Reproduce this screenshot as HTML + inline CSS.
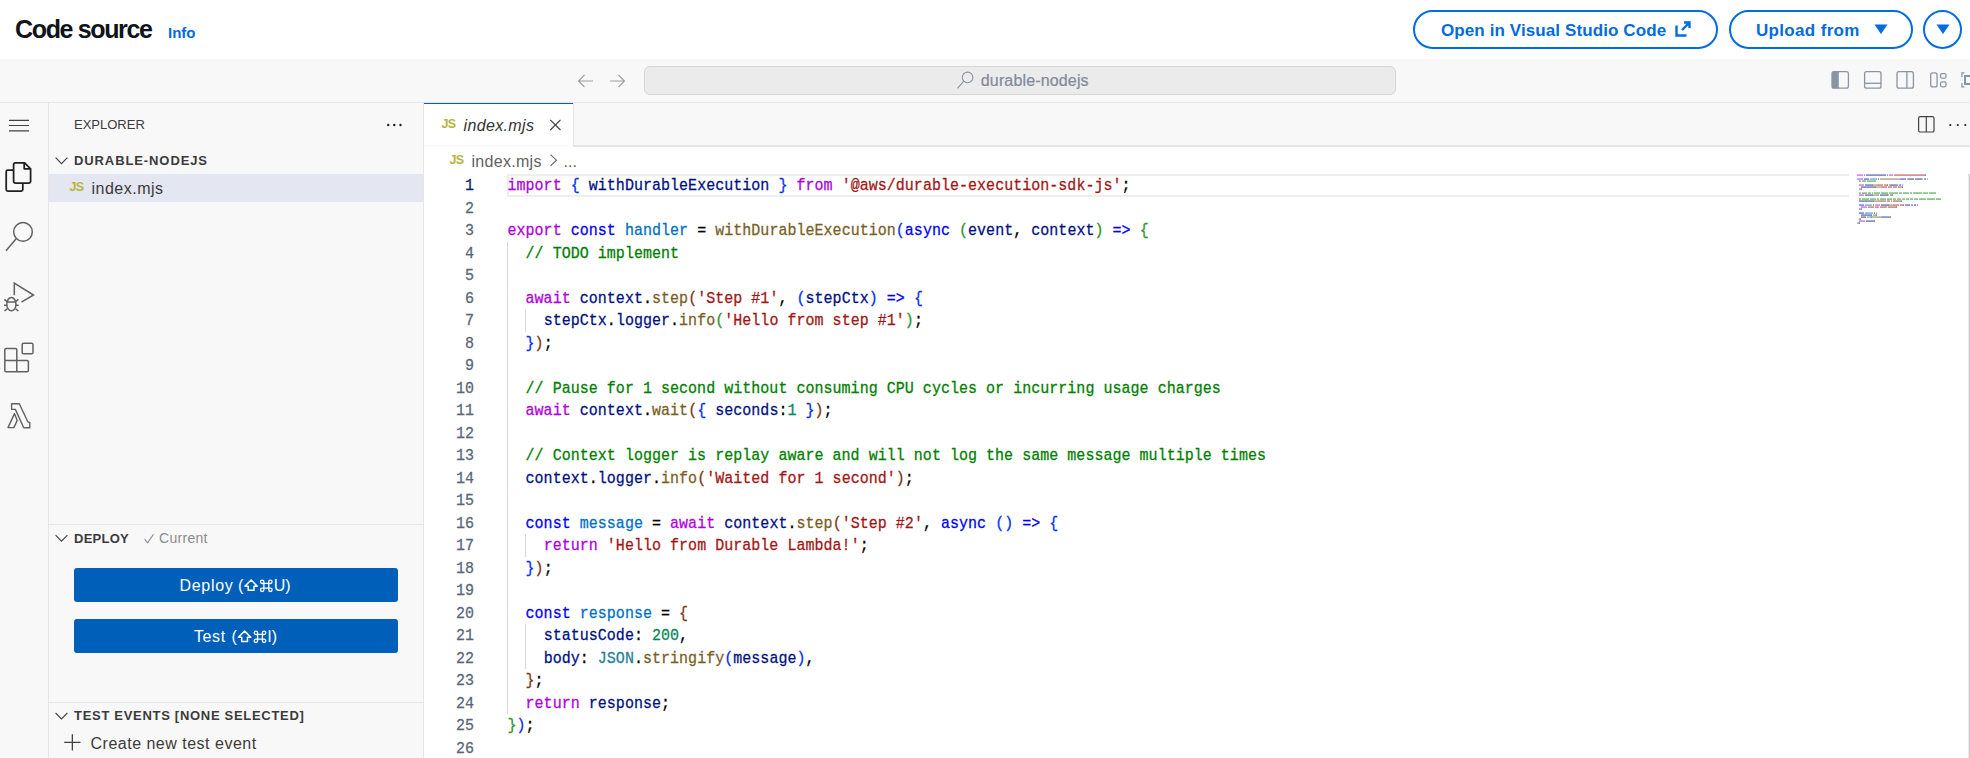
<!DOCTYPE html>
<html><head><meta charset="utf-8">
<style>
*{margin:0;padding:0;box-sizing:border-box}
html,body{width:1970px;height:758px;overflow:hidden;background:#fff;font-family:"Liberation Sans",sans-serif}
.a{position:absolute;white-space:nowrap}
svg{position:absolute;overflow:visible}
.btn{position:absolute;border:2px solid #006ce0;border-radius:20px}
.bt{color:#006ce0;font-weight:bold;font-size:17px;line-height:20px}
.code{position:absolute;font-family:"Liberation Mono",monospace;font-size:15px;line-height:22.5px;height:22.5px;white-space:pre;color:#000;transform:scaleY(1.1);transform-origin:0 13.7px;-webkit-text-stroke:0.25px currentColor;letter-spacing:0.028px}
.ln{position:absolute;left:404px;width:70px;text-align:right;color:#5b6675;font-family:"Liberation Mono",monospace;font-size:15px;line-height:22.5px;height:22.5px;transform:scaleY(1.1);transform-origin:0 13.7px;-webkit-text-stroke:0.25px currentColor;letter-spacing:0.028px}
.kw{color:#af00db}.st{color:#0000ff}.v{color:#001080}.c{color:#0070c1}.f{color:#795e26}.s{color:#a31515}.cm{color:#008000}.n{color:#098658}.cl{color:#267f99}
.b1{color:#0431fa}.b2{color:#319331}.b3{color:#7b3814}
.g{position:absolute;width:1px;background:#d9d9d9}
</style></head><body>
<!-- page header -->
<div class="a" style="left:15px;top:14px;font-size:25px;line-height:30px;font-weight:bold;color:#0f141a;letter-spacing:-1.35px">Code source</div>
<div class="a" style="left:168px;top:24px;font-size:15px;line-height:18px;font-weight:bold;color:#006ce0">Info</div>
<div class="btn" style="left:1413px;top:10px;width:305px;height:39px"></div>
<div class="a bt" style="left:1441px;top:21px;letter-spacing:0.1px">Open in Visual Studio Code</div>
<svg style="left:1675px;top:21px" width="16" height="16" viewBox="0 0 16 16"><path d="M1.5 4.5v10h10M7 9L14.5 1.5M9 1.5h5.5V7" fill="none" stroke="#006ce0" stroke-width="2.4"/></svg>
<div class="btn" style="left:1729px;top:10px;width:184px;height:39px"></div>
<div class="a bt" style="left:1756px;top:21px;letter-spacing:0.33px">Upload from</div>
<svg style="left:1874px;top:24px" width="14" height="10" viewBox="0 0 14 10"><path d="M0.5 0.5h13L7 10z" fill="#006ce0"/></svg>
<div class="btn" style="left:1923px;top:10px;width:39px;height:39px;border-radius:50%"></div>
<svg style="left:1936px;top:24px" width="14" height="10" viewBox="0 0 14 10"><path d="M0.5 0.5h13L7 10z" fill="#006ce0"/></svg>

<!-- title bar -->
<div class="a" style="left:0;top:59px;width:1970px;height:43px;background:#f8f8f8"></div>
<div class="a" style="left:0;top:102px;width:1970px;height:1px;background:#e5e5e5"></div>
<svg style="left:577px;top:73.5px" width="16" height="14" viewBox="0 0 16 14"><path d="M16 7H1.5M7.5 1L1.5 7l6 6" fill="none" stroke="#a0a0a0" stroke-width="1.2"/></svg>
<svg style="left:610px;top:73.5px" width="16" height="14" viewBox="0 0 16 14"><path d="M0 7h14.5M8.5 1l6 6-6 6" fill="none" stroke="#a0a0a0" stroke-width="1.2"/></svg>
<div class="a" style="left:644px;top:66px;width:752px;height:29px;background:#ebebeb;border:1px solid #d4d5d9;border-radius:6px"></div>
<svg style="left:956px;top:70px" width="20" height="20" viewBox="0 0 20 20"><circle cx="11.6" cy="7.4" r="5.3" fill="none" stroke="#8a939f" stroke-width="1.1"/><path d="M7.8 11.2L1.5 18.4" stroke="#8a939f" stroke-width="1.1"/></svg>
<div class="a" style="left:980.8px;top:72.2px;font-size:16px;line-height:18px;color:#818a97;letter-spacing:0.15px;-webkit-text-stroke:0.2px #818a97">durable-nodejs</div>
<!-- layout icons -->
<svg style="left:0;top:0" width="1970" height="100" viewBox="0 0 1970 100">
<g fill="none" stroke="#8a95a3" stroke-width="1.3">
<rect x="1832" y="71.6" width="16.4" height="16.6" rx="2"/>
<rect x="1864.6" y="71.6" width="16.4" height="16.6" rx="2"/><path d="M1864.6 83.3h16.4"/>
<rect x="1897" y="71.6" width="16.4" height="16.6" rx="2"/><path d="M1906.9 71.6v16.6"/>
<rect x="1930.7" y="72.9" width="6.4" height="14" rx="2"/>
<rect x="1940.6" y="73.6" width="5.4" height="4.6" rx="1.5"/>
<rect x="1940.6" y="81.9" width="5.4" height="4.9" rx="1.5"/>
<path d="M1964.5 72.9h-2.6v4M1961.9 82.9v4h2.6"/>
</g>
<path d="M1832 72.6a1 1 0 0 1 1-1h5.8v16.6h-5.8a1 1 0 0 1 -1-1z" fill="#8a95a3"/>
<rect x="1964" y="75" width="6" height="10" fill="#8a95a3"/>
<rect x="1966" y="77" width="4" height="6" fill="#f8f8f8"/>
</svg>

<!-- activity bar -->
<div class="a" style="left:0;top:103px;width:48px;height:655px;background:#f8f8f8"></div>
<div class="a" style="left:48px;top:103px;width:1px;height:655px;background:#e5e5e5"></div>
<svg style="left:0;top:103px" width="48" height="655" viewBox="0 103 48 655">
<g fill="none" stroke="#424242" stroke-width="1.2">
<path d="M9 120.3h20M9 125.5h20M9 130.8h20"/>
</g>
<g fill="none" stroke="#1f1f1f" stroke-width="1.75" stroke-linejoin="round">
<path d="M13.8 170.2h-6a1.6 1.6 0 0 0 -1.6 1.6v17.6a1.6 1.6 0 0 0 1.6 1.6h13.4a1.6 1.6 0 0 0 1.6 -1.6v-6"/>
<path d="M15.2 162.8h9.4l6 6v12.8a1.6 1.6 0 0 1 -1.6 1.6h-13.8a1.6 1.6 0 0 1 -1.6 -1.6v-17.2a1.6 1.6 0 0 1 1.6 -1.6z"/>
<path d="M24.2 163v5.8h6"/>
</g>
<g fill="none" stroke="#616161" stroke-width="1.5">
<circle cx="23" cy="231.9" r="9.3"/>
<path d="M16.4 238.6L6 250.8"/>
<path d="M14.3 295.2V283.2l19.2 11.8-12 7.2"/>
<ellipse cx="11.4" cy="304.2" rx="4.6" ry="6.6"/>
<path d="M6.8 302h9.2M4.4 299.4l2.8 2.2M18.4 299.4l-2.8 2.2M4 305.2h2.8M15.8 305.2h2.8M4.4 311l2.8-2.2M18.4 311l-2.8-2.2"/>
<path d="M6.2 348.4h9.2a1.4 1.4 0 0 1 1.4 1.4v10.6h10.2a1.4 1.4 0 0 1 1.4 1.4v8.6a1.4 1.4 0 0 1 -1.4 1.4h-20.8a1.4 1.4 0 0 1 -1.4 -1.4v-20.6a1.4 1.4 0 0 1 1.4 -1.4zM4.8 360.4h12M16.8 360.4v11.4"/>
<rect x="22.2" y="343.2" width="10.8" height="10.6" rx="1.4"/>
<path d="M11.6 403.8H19.3L27.8 421.8L29.8 422.6V427.8H23.7L15.4 409.4H11.6Z" stroke-width="1.4" stroke-linejoin="round"/><path d="M14.5 413.6L17.2 420.4L13.9 427.6H8Z" stroke-width="1.4" stroke-linejoin="round"/>
</g>
</svg>
<!-- sidebar -->
<div class="a" style="left:49px;top:103px;width:374px;height:655px;background:#f8f8f8"></div>
<div class="a" style="left:423px;top:103px;width:1px;height:655px;background:#e5e5e5"></div>
<div class="a" style="left:74px;top:117px;font-size:13px;line-height:15px;color:#3b3b3b;letter-spacing:0px">EXPLORER</div>
<svg style="left:0;top:0" width="430" height="758" viewBox="0 0 430 758">
<g fill="#1f1f1f"><circle cx="388.2" cy="125" r="1.2"/><circle cx="394.3" cy="125" r="1.2"/><circle cx="400.5" cy="125" r="1.2"/></g>
<g fill="none" stroke="#424242" stroke-width="1.1">
<path d="M55.6 157.6l5.9 6 5.9-6"/>
<path d="M55.6 535.2l5.9 6 5.9-6"/>
<path d="M55.6 713l5.9 6 5.9-6"/>
<path d="M64.2 742.4h16.3M72.35 734.3v16.1" stroke-width="1.3"/>
</g>
<path d="M144.6 539.2l3 3.6l5.9-8.6" fill="none" stroke="#8c8c8c" stroke-width="1.1"/>
</svg>
<div class="a" style="left:74px;top:153px;font-size:13px;line-height:15px;font-weight:bold;color:#3b3b3b;letter-spacing:0.9px">DURABLE-NODEJS</div>
<div class="a" style="left:49px;top:174px;width:374px;height:28px;background:#e4e6f1"></div>
<div class="a" style="left:69.5px;top:181px;font-size:12.5px;line-height:12px;font-weight:bold;color:#b5b53a;letter-spacing:-0.6px">JS</div>
<div class="a" style="left:91.5px;top:180px;font-size:16px;line-height:18px;color:#3b3b3b;letter-spacing:0.5px">index.mjs</div>

<div class="a" style="left:49px;top:524px;width:374px;height:1px;background:#e5e5e5"></div>
<div class="a" style="left:74px;top:531px;font-size:13px;line-height:15px;font-weight:bold;color:#3b3b3b;letter-spacing:0.25px">DEPLOY</div>
<div class="a" style="left:159px;top:530px;font-size:14px;line-height:16px;color:#8c8c8c;letter-spacing:0.3px">Current</div>
<div class="a" style="left:74px;top:568px;width:324px;height:34px;background:#005fb8;border-radius:3px"></div>
<div class="a" style="left:74px;top:619px;width:324px;height:34px;background:#005fb8;border-radius:3px"></div>
<div class="a" style="left:179.5px;top:576.5px;font-size:16px;line-height:18px;color:#fff;letter-spacing:0.7px">Deploy</div>
<div class="a" style="left:238px;top:576.5px;font-size:16px;line-height:18px;color:#fff">(</div>
<div class="a" style="left:273.8px;top:576.5px;font-size:16px;line-height:18px;color:#fff">U)</div>
<div class="a" style="left:194px;top:627.5px;font-size:16px;line-height:18px;color:#fff;letter-spacing:0.6px">Test</div>
<div class="a" style="left:231.5px;top:627.5px;font-size:16px;line-height:18px;color:#fff">(</div>
<div class="a" style="left:267.2px;top:627.5px;font-size:16px;line-height:18px;color:#fff">I)</div>
<svg style="left:0;top:0" width="430" height="758" viewBox="0 0 430 758">
<g fill="none" stroke="#fff" stroke-width="1.5" stroke-linejoin="round">
<path d="M251.1 580l6.2 6.2h-3.3v4.1h-5.8v-4.1h-3.3z"/>
<path d="M244.6 631.1l6.2 6.2h-3.3v4.1h-5.8v-4.1h-3.3z"/>
<path d="M263.9 583.4h4.8v4.8h-4.8zM263.9 583.4v-1.6a1.7 1.7 0 1 0 -1.7 1.7h1.7M268.7 583.4v-1.6a1.7 1.7 0 1 1 1.7 1.7h-1.7M263.9 588.2v1.6a1.7 1.7 0 1 1 -1.7 -1.7h1.7M268.7 588.2v1.6a1.7 1.7 0 1 0 1.7 -1.7h-1.7" stroke-width="1.3"/>
<path d="M257.6 634.4h4.8v4.8h-4.8zM257.6 634.4v-1.6a1.7 1.7 0 1 0 -1.7 1.7h1.7M262.4 634.4v-1.6a1.7 1.7 0 1 1 1.7 1.7h-1.7M257.6 639.2v1.6a1.7 1.7 0 1 1 -1.7 -1.7h1.7M262.4 639.2v1.6a1.7 1.7 0 1 0 1.7 -1.7h-1.7" stroke-width="1.3"/>
</g>
</svg>
<div class="a" style="left:49px;top:702px;width:374px;height:1px;background:#e5e5e5"></div>
<div class="a" style="left:74px;top:708px;font-size:13px;line-height:15px;font-weight:bold;color:#3b3b3b;letter-spacing:0.7px">TEST EVENTS [NONE SELECTED]</div>
<div class="a" style="left:90.5px;top:735px;font-size:16px;line-height:18px;color:#3b3b3b;letter-spacing:0.5px">Create new test event</div>
<!-- editor -->
<div class="a" style="left:424px;top:103px;width:1546px;height:43px;background:#f8f8f8"></div>
<div class="a" style="left:424px;top:145px;width:1546px;height:2px;background:#e5e5e5"></div>
<div class="a" style="left:424px;top:147px;width:1546px;height:611px;background:#fff"></div>
<div class="a" style="left:424px;top:103px;width:149px;height:44px;background:#fff;border-top:1px solid #005fb8;border-bottom:2px solid #fafafa"></div>
<div class="a" style="left:573px;top:103px;width:1px;height:42px;background:#e5e5e5"></div>
<div class="a" style="left:441.5px;top:118px;font-size:12.5px;line-height:12px;font-weight:bold;color:#b5b53a;letter-spacing:-0.6px">JS</div>
<div class="a" style="left:463.5px;top:116.5px;font-size:16px;line-height:18px;font-style:italic;color:#333;letter-spacing:0.35px">index.mjs</div>
<svg style="left:0;top:0" width="1970" height="200" viewBox="0 0 1970 200">
<path d="M550.3 119.8l10.2 10.2M560.5 119.8l-10.2 10.2" stroke="#424242" stroke-width="1.2" fill="none"/>
<rect x="1918.6" y="116.6" width="15.4" height="15.4" rx="1.6" fill="none" stroke="#424242" stroke-width="1.2"/>
<path d="M1926.3 116.6v15.4" stroke="#424242" stroke-width="1.2"/>
<g fill="#1f1f1f"><circle cx="1950.3" cy="125" r="1.1"/><circle cx="1957.8" cy="125" r="1.1"/><circle cx="1965.3" cy="125" r="1.1"/></g>
<path d="M550.5 154.6l6 5.6-6 5.6" stroke="#616161" stroke-width="1.1" fill="none"/>
</svg>
<div class="a" style="left:449.5px;top:154px;font-size:12.5px;line-height:12px;font-weight:bold;color:#b5b53a;letter-spacing:-0.6px">JS</div>
<div class="a" style="left:471.5px;top:152.5px;font-size:16px;line-height:18px;color:#616161;letter-spacing:0.3px">index.mjs</div>
<div class="a" style="left:563.5px;top:152.5px;font-size:16px;line-height:18px;color:#616161">...</div>
<!-- current line box -->
<div class="a" style="left:507px;top:174px;width:1342px;height:23px;border:2px solid #eeeeee;border-right:none"></div>
<!-- guides -->
<div class="g" style="left:507px;top:241.5px;height:472.5px"></div>
<div class="g" style="left:525px;top:309px;height:22.5px"></div>
<div class="g" style="left:525px;top:534px;height:22.5px"></div>
<div class="g" style="left:525px;top:624px;height:45px"></div>
<div class="a" style="left:1968px;top:174px;width:1px;height:584px;background:#ececec"></div><div class="a" style="left:1969px;top:174px;width:1px;height:584px;background:#c8c8c8"></div>
<div class="ln" style="top:176.3px;color:#0b216f">1</div>
<div class="code" style="left:507.5px;top:176.3px"><span class="kw">import</span> <span class="b1">{</span> <span class="v">withDurableExecution</span> <span class="b1">}</span> <span class="kw">from</span> <span class="s">&#x27;@aws/durable-execution-sdk-js&#x27;</span>;</div>
<div class="ln" style="top:198.8px">2</div>
<div class="ln" style="top:221.3px">3</div>
<div class="code" style="left:507.5px;top:221.3px"><span class="kw">export</span> <span class="st">const</span> <span class="c">handler</span> = <span class="f">withDurableExecution</span><span class="b1">(</span><span class="st">async</span> <span class="b2">(</span><span class="v">event</span>, <span class="v">context</span><span class="b2">)</span> <span class="st">=&gt;</span> <span class="b2">{</span></div>
<div class="ln" style="top:243.8px">4</div>
<div class="code" style="left:507.5px;top:243.8px">  <span class="cm">// TODO implement</span></div>
<div class="ln" style="top:266.3px">5</div>
<div class="ln" style="top:288.8px">6</div>
<div class="code" style="left:507.5px;top:288.8px">  <span class="kw">await</span> <span class="v">context</span>.<span class="f">step</span><span class="b3">(</span><span class="s">&#x27;Step #1&#x27;</span>, <span class="b1">(</span><span class="v">stepCtx</span><span class="b1">)</span> <span class="st">=&gt;</span> <span class="b1">{</span></div>
<div class="ln" style="top:311.3px">7</div>
<div class="code" style="left:507.5px;top:311.3px">    <span class="v">stepCtx</span>.<span class="v">logger</span>.<span class="f">info</span><span class="b2">(</span><span class="s">&#x27;Hello from step #1&#x27;</span><span class="b2">)</span>;</div>
<div class="ln" style="top:333.8px">8</div>
<div class="code" style="left:507.5px;top:333.8px">  <span class="b1">}</span><span class="b3">)</span>;</div>
<div class="ln" style="top:356.3px">9</div>
<div class="ln" style="top:378.8px">10</div>
<div class="code" style="left:507.5px;top:378.8px">  <span class="cm">// Pause for 1 second without consuming CPU cycles or incurring usage charges</span></div>
<div class="ln" style="top:401.3px">11</div>
<div class="code" style="left:507.5px;top:401.3px">  <span class="kw">await</span> <span class="v">context</span>.<span class="f">wait</span><span class="b3">(</span><span class="b1">{</span> <span class="v">seconds</span>:<span class="n">1</span> <span class="b1">}</span><span class="b3">)</span>;</div>
<div class="ln" style="top:423.8px">12</div>
<div class="ln" style="top:446.3px">13</div>
<div class="code" style="left:507.5px;top:446.3px">  <span class="cm">// Context logger is replay aware and will not log the same message multiple times</span></div>
<div class="ln" style="top:468.8px">14</div>
<div class="code" style="left:507.5px;top:468.8px">  <span class="v">context</span>.<span class="v">logger</span>.<span class="f">info</span><span class="b3">(</span><span class="s">&#x27;Waited for 1 second&#x27;</span><span class="b3">)</span>;</div>
<div class="ln" style="top:491.3px">15</div>
<div class="ln" style="top:513.8px">16</div>
<div class="code" style="left:507.5px;top:513.8px">  <span class="st">const</span> <span class="c">message</span> = <span class="kw">await</span> <span class="v">context</span>.<span class="f">step</span><span class="b3">(</span><span class="s">&#x27;Step #2&#x27;</span>, <span class="st">async</span> <span class="b1">()</span> <span class="st">=&gt;</span> <span class="b1">{</span></div>
<div class="ln" style="top:536.3px">17</div>
<div class="code" style="left:507.5px;top:536.3px">    <span class="kw">return</span> <span class="s">&#x27;Hello from Durable Lambda!&#x27;</span>;</div>
<div class="ln" style="top:558.8px">18</div>
<div class="code" style="left:507.5px;top:558.8px">  <span class="b1">}</span><span class="b3">)</span>;</div>
<div class="ln" style="top:581.3px">19</div>
<div class="ln" style="top:603.8px">20</div>
<div class="code" style="left:507.5px;top:603.8px">  <span class="st">const</span> <span class="c">response</span> = <span class="b3">{</span></div>
<div class="ln" style="top:626.3px">21</div>
<div class="code" style="left:507.5px;top:626.3px">    <span class="v">statusCode</span>: <span class="n">200</span>,</div>
<div class="ln" style="top:648.8px">22</div>
<div class="code" style="left:507.5px;top:648.8px">    <span class="v">body</span>: <span class="cl">JSON</span>.<span class="f">stringify</span><span class="b1">(</span><span class="v">message</span><span class="b1">)</span>,</div>
<div class="ln" style="top:671.3px">23</div>
<div class="code" style="left:507.5px;top:671.3px">  <span class="b3">}</span>;</div>
<div class="ln" style="top:693.8px">24</div>
<div class="code" style="left:507.5px;top:693.8px">  <span class="kw">return</span> <span class="v">response</span>;</div>
<div class="ln" style="top:716.3px">25</div>
<div class="code" style="left:507.5px;top:716.3px"><span class="b2">}</span><span class="b1">)</span>;</div>
<div class="ln" style="top:738.8px">26</div>
<svg style="left:0;top:0" width="1970" height="758" viewBox="0 0 1970 758"><g opacity="0.5"><rect x="1857" y="174.3" width="6" height="1.6" fill="#af00db"/><rect x="1864" y="174.3" width="1" height="1.6" fill="#0431fa"/><rect x="1866" y="174.3" width="20" height="1.6" fill="#001080"/><rect x="1887" y="174.3" width="1" height="1.6" fill="#0431fa"/><rect x="1889" y="174.3" width="4" height="1.6" fill="#af00db"/><rect x="1894" y="174.3" width="31" height="1.6" fill="#a31515"/><rect x="1925" y="174.3" width="1" height="1.6" fill="#000000"/><rect x="1857" y="178.3" width="6" height="1.6" fill="#af00db"/><rect x="1864" y="178.3" width="5" height="1.6" fill="#0000ff"/><rect x="1870" y="178.3" width="7" height="1.6" fill="#0070c1"/><rect x="1878" y="178.3" width="1" height="1.6" fill="#000000"/><rect x="1880" y="178.3" width="20" height="1.6" fill="#795e26"/><rect x="1900" y="178.3" width="1" height="1.6" fill="#0431fa"/><rect x="1901" y="178.3" width="5" height="1.6" fill="#0000ff"/><rect x="1907" y="178.3" width="1" height="1.6" fill="#319331"/><rect x="1908" y="178.3" width="5" height="1.6" fill="#001080"/><rect x="1913" y="178.3" width="1" height="1.6" fill="#000000"/><rect x="1915" y="178.3" width="7" height="1.6" fill="#001080"/><rect x="1922" y="178.3" width="1" height="1.6" fill="#319331"/><rect x="1924" y="178.3" width="2" height="1.6" fill="#0000ff"/><rect x="1927" y="178.3" width="1" height="1.6" fill="#319331"/><rect x="1859" y="180.3" width="2" height="1.6" fill="#008000"/><rect x="1862" y="180.3" width="4" height="1.6" fill="#008000"/><rect x="1867" y="180.3" width="9" height="1.6" fill="#008000"/><rect x="1859" y="184.3" width="5" height="1.6" fill="#af00db"/><rect x="1865" y="184.3" width="7" height="1.6" fill="#001080"/><rect x="1872" y="184.3" width="1" height="1.6" fill="#000000"/><rect x="1873" y="184.3" width="4" height="1.6" fill="#795e26"/><rect x="1877" y="184.3" width="1" height="1.6" fill="#7b3814"/><rect x="1878" y="184.3" width="5" height="1.6" fill="#a31515"/><rect x="1884" y="184.3" width="3" height="1.6" fill="#a31515"/><rect x="1887" y="184.3" width="1" height="1.6" fill="#000000"/><rect x="1889" y="184.3" width="1" height="1.6" fill="#0431fa"/><rect x="1890" y="184.3" width="7" height="1.6" fill="#001080"/><rect x="1897" y="184.3" width="1" height="1.6" fill="#0431fa"/><rect x="1899" y="184.3" width="2" height="1.6" fill="#0000ff"/><rect x="1902" y="184.3" width="1" height="1.6" fill="#0431fa"/><rect x="1861" y="186.3" width="7" height="1.6" fill="#001080"/><rect x="1868" y="186.3" width="1" height="1.6" fill="#000000"/><rect x="1869" y="186.3" width="6" height="1.6" fill="#001080"/><rect x="1875" y="186.3" width="1" height="1.6" fill="#000000"/><rect x="1876" y="186.3" width="4" height="1.6" fill="#795e26"/><rect x="1880" y="186.3" width="1" height="1.6" fill="#319331"/><rect x="1881" y="186.3" width="6" height="1.6" fill="#a31515"/><rect x="1888" y="186.3" width="4" height="1.6" fill="#a31515"/><rect x="1893" y="186.3" width="4" height="1.6" fill="#a31515"/><rect x="1898" y="186.3" width="3" height="1.6" fill="#a31515"/><rect x="1901" y="186.3" width="1" height="1.6" fill="#319331"/><rect x="1902" y="186.3" width="1" height="1.6" fill="#000000"/><rect x="1859" y="188.3" width="1" height="1.6" fill="#0431fa"/><rect x="1860" y="188.3" width="1" height="1.6" fill="#7b3814"/><rect x="1861" y="188.3" width="1" height="1.6" fill="#000000"/><rect x="1859" y="192.3" width="2" height="1.6" fill="#008000"/><rect x="1862" y="192.3" width="5" height="1.6" fill="#008000"/><rect x="1868" y="192.3" width="3" height="1.6" fill="#008000"/><rect x="1872" y="192.3" width="1" height="1.6" fill="#008000"/><rect x="1874" y="192.3" width="6" height="1.6" fill="#008000"/><rect x="1881" y="192.3" width="7" height="1.6" fill="#008000"/><rect x="1889" y="192.3" width="9" height="1.6" fill="#008000"/><rect x="1899" y="192.3" width="3" height="1.6" fill="#008000"/><rect x="1903" y="192.3" width="6" height="1.6" fill="#008000"/><rect x="1910" y="192.3" width="2" height="1.6" fill="#008000"/><rect x="1913" y="192.3" width="9" height="1.6" fill="#008000"/><rect x="1923" y="192.3" width="5" height="1.6" fill="#008000"/><rect x="1929" y="192.3" width="7" height="1.6" fill="#008000"/><rect x="1859" y="194.3" width="5" height="1.6" fill="#af00db"/><rect x="1865" y="194.3" width="7" height="1.6" fill="#001080"/><rect x="1872" y="194.3" width="1" height="1.6" fill="#000000"/><rect x="1873" y="194.3" width="4" height="1.6" fill="#795e26"/><rect x="1877" y="194.3" width="1" height="1.6" fill="#7b3814"/><rect x="1878" y="194.3" width="1" height="1.6" fill="#0431fa"/><rect x="1880" y="194.3" width="7" height="1.6" fill="#001080"/><rect x="1887" y="194.3" width="1" height="1.6" fill="#000000"/><rect x="1888" y="194.3" width="1" height="1.6" fill="#098658"/><rect x="1890" y="194.3" width="1" height="1.6" fill="#0431fa"/><rect x="1891" y="194.3" width="1" height="1.6" fill="#7b3814"/><rect x="1892" y="194.3" width="1" height="1.6" fill="#000000"/><rect x="1859" y="198.3" width="2" height="1.6" fill="#008000"/><rect x="1862" y="198.3" width="7" height="1.6" fill="#008000"/><rect x="1870" y="198.3" width="6" height="1.6" fill="#008000"/><rect x="1877" y="198.3" width="2" height="1.6" fill="#008000"/><rect x="1880" y="198.3" width="6" height="1.6" fill="#008000"/><rect x="1887" y="198.3" width="5" height="1.6" fill="#008000"/><rect x="1893" y="198.3" width="3" height="1.6" fill="#008000"/><rect x="1897" y="198.3" width="4" height="1.6" fill="#008000"/><rect x="1902" y="198.3" width="3" height="1.6" fill="#008000"/><rect x="1906" y="198.3" width="3" height="1.6" fill="#008000"/><rect x="1910" y="198.3" width="3" height="1.6" fill="#008000"/><rect x="1914" y="198.3" width="4" height="1.6" fill="#008000"/><rect x="1919" y="198.3" width="7" height="1.6" fill="#008000"/><rect x="1927" y="198.3" width="8" height="1.6" fill="#008000"/><rect x="1936" y="198.3" width="5" height="1.6" fill="#008000"/><rect x="1859" y="200.3" width="7" height="1.6" fill="#001080"/><rect x="1866" y="200.3" width="1" height="1.6" fill="#000000"/><rect x="1867" y="200.3" width="6" height="1.6" fill="#001080"/><rect x="1873" y="200.3" width="1" height="1.6" fill="#000000"/><rect x="1874" y="200.3" width="4" height="1.6" fill="#795e26"/><rect x="1878" y="200.3" width="1" height="1.6" fill="#7b3814"/><rect x="1879" y="200.3" width="7" height="1.6" fill="#a31515"/><rect x="1887" y="200.3" width="3" height="1.6" fill="#a31515"/><rect x="1891" y="200.3" width="1" height="1.6" fill="#a31515"/><rect x="1893" y="200.3" width="7" height="1.6" fill="#a31515"/><rect x="1900" y="200.3" width="1" height="1.6" fill="#7b3814"/><rect x="1901" y="200.3" width="1" height="1.6" fill="#000000"/><rect x="1859" y="204.3" width="5" height="1.6" fill="#0000ff"/><rect x="1865" y="204.3" width="7" height="1.6" fill="#0070c1"/><rect x="1873" y="204.3" width="1" height="1.6" fill="#000000"/><rect x="1875" y="204.3" width="5" height="1.6" fill="#af00db"/><rect x="1881" y="204.3" width="7" height="1.6" fill="#001080"/><rect x="1888" y="204.3" width="1" height="1.6" fill="#000000"/><rect x="1889" y="204.3" width="4" height="1.6" fill="#795e26"/><rect x="1893" y="204.3" width="1" height="1.6" fill="#7b3814"/><rect x="1894" y="204.3" width="5" height="1.6" fill="#a31515"/><rect x="1900" y="204.3" width="3" height="1.6" fill="#a31515"/><rect x="1903" y="204.3" width="1" height="1.6" fill="#000000"/><rect x="1905" y="204.3" width="5" height="1.6" fill="#0000ff"/><rect x="1911" y="204.3" width="2" height="1.6" fill="#0431fa"/><rect x="1914" y="204.3" width="2" height="1.6" fill="#0000ff"/><rect x="1917" y="204.3" width="1" height="1.6" fill="#0431fa"/><rect x="1861" y="206.3" width="6" height="1.6" fill="#af00db"/><rect x="1868" y="206.3" width="6" height="1.6" fill="#a31515"/><rect x="1875" y="206.3" width="4" height="1.6" fill="#a31515"/><rect x="1880" y="206.3" width="7" height="1.6" fill="#a31515"/><rect x="1888" y="206.3" width="8" height="1.6" fill="#a31515"/><rect x="1896" y="206.3" width="1" height="1.6" fill="#000000"/><rect x="1859" y="208.3" width="1" height="1.6" fill="#0431fa"/><rect x="1860" y="208.3" width="1" height="1.6" fill="#7b3814"/><rect x="1861" y="208.3" width="1" height="1.6" fill="#000000"/><rect x="1859" y="212.3" width="5" height="1.6" fill="#0000ff"/><rect x="1865" y="212.3" width="8" height="1.6" fill="#0070c1"/><rect x="1874" y="212.3" width="1" height="1.6" fill="#000000"/><rect x="1876" y="212.3" width="1" height="1.6" fill="#7b3814"/><rect x="1861" y="214.3" width="10" height="1.6" fill="#001080"/><rect x="1871" y="214.3" width="1" height="1.6" fill="#000000"/><rect x="1873" y="214.3" width="3" height="1.6" fill="#098658"/><rect x="1876" y="214.3" width="1" height="1.6" fill="#000000"/><rect x="1861" y="216.3" width="4" height="1.6" fill="#001080"/><rect x="1865" y="216.3" width="1" height="1.6" fill="#000000"/><rect x="1867" y="216.3" width="4" height="1.6" fill="#267f99"/><rect x="1871" y="216.3" width="1" height="1.6" fill="#000000"/><rect x="1872" y="216.3" width="9" height="1.6" fill="#795e26"/><rect x="1881" y="216.3" width="1" height="1.6" fill="#0431fa"/><rect x="1882" y="216.3" width="7" height="1.6" fill="#001080"/><rect x="1889" y="216.3" width="1" height="1.6" fill="#0431fa"/><rect x="1890" y="216.3" width="1" height="1.6" fill="#000000"/><rect x="1859" y="218.3" width="1" height="1.6" fill="#7b3814"/><rect x="1860" y="218.3" width="1" height="1.6" fill="#000000"/><rect x="1859" y="220.3" width="6" height="1.6" fill="#af00db"/><rect x="1866" y="220.3" width="8" height="1.6" fill="#001080"/><rect x="1874" y="220.3" width="1" height="1.6" fill="#000000"/><rect x="1857" y="222.3" width="1" height="1.6" fill="#319331"/><rect x="1858" y="222.3" width="1" height="1.6" fill="#0431fa"/><rect x="1859" y="222.3" width="1" height="1.6" fill="#000000"/></g></svg>
</body></html>
